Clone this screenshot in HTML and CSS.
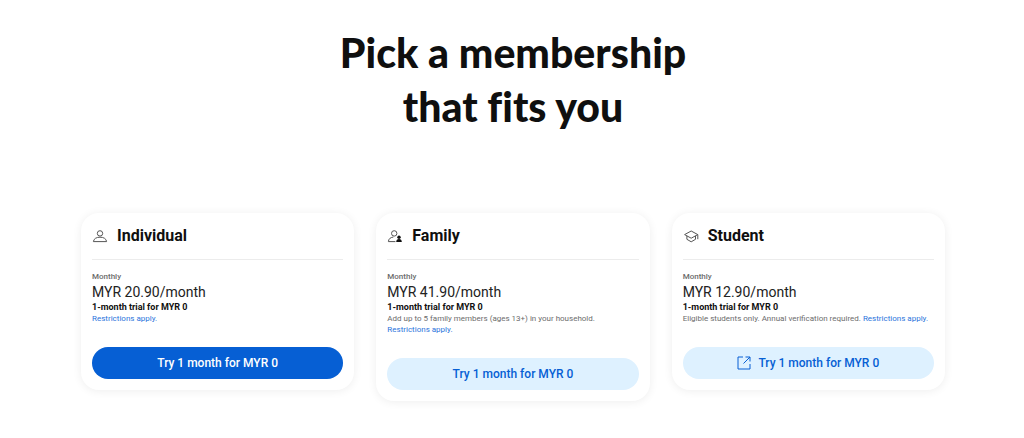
FILE: index.html
```html
<!DOCTYPE html>
<html lang="en">
<head>
  <meta charset="UTF-8" />
  <meta name="viewport" content="width=device-width, initial-scale=1" />
  <title>Pick a membership</title>
  <link rel="stylesheet" href="styles.css">
</head>
<body>

  <main class="membership">
    <h1>Pick a membership<br>that fits you</h1>

    <div class="plans">

      <!-- Individual -->
      <section class="plan">
        <header class="plan-header">
          <svg class="plan-icon" viewBox="0 0 16 16" aria-hidden="true">
            <circle cx="8" cy="5.4" r="2.7" />
            <path d="M1.4 13.6C1.8 10.6 4.4 9.2 8 9.2s6.2 1.4 6.6 4.4z" />
          </svg>
          <h2>Individual</h2>
        </header>
        <p class="period">Monthly</p>
        <p class="price">MYR 20.90/month</p>
        <p class="trial">1-month trial for MYR 0</p>
        <p class="terms"><a href="#">Restrictions apply.</a></p>
        <button type="button" class="btn btn-primary">Try 1 month for MYR 0</button>
      </section>

      <!-- Family -->
      <section class="plan">
        <header class="plan-header">
          <svg class="plan-icon" viewBox="0 0 16 16" aria-hidden="true">
            <circle cx="7.2" cy="5.4" r="2.7" />
            <path d="M8.4 13.6H1.4c.2-2.8 1.8-4 5-4.6" />
            <circle class="solid" cx="12" cy="9.3" r="1.7" />
            <path class="solid" d="M9.2 14.1c0-2.1 1-3 2.8-3s2.8.9 2.8 3z" />
          </svg>
          <h2>Family</h2>
        </header>
        <p class="period">Monthly</p>
        <p class="price">MYR 41.90/month</p>
        <p class="trial">1-month trial for MYR 0</p>
        <p class="terms">Add up to 5 family members (ages 13+) in your household. <a href="#">Restrictions apply.</a></p>
        <button type="button" class="btn">Try 1 month for MYR 0</button>
      </section>

      <!-- Student -->
      <section class="plan">
        <header class="plan-header">
          <svg class="plan-icon" viewBox="0 0 16 16" aria-hidden="true">
            <path d="M1.6 6.6L8.2 3l6.6 3.6-6.6 3.6z" />
            <path d="M3.9 7.9v3.4l4.3 2.5 4.3-2.5V7.9M14.8 6.6v4.6" />
          </svg>
          <h2>Student</h2>
        </header>
        <p class="period">Monthly</p>
        <p class="price">MYR 12.90/month</p>
        <p class="trial">1-month trial for MYR 0</p>
        <p class="terms">Eligible students only. Annual verification required. <a href="#">Restrictions apply.</a></p>
        <button type="button" class="btn">
          <svg class="btn-icon" viewBox="0 0 14 14" aria-hidden="true">
            <path d="M6 1H1v12h12V8M8.5 1H13v4.5M13 1L6.5 7.5" />
          </svg>
          Try 1 month for MYR 0
        </button>
      </section>

    </div>
  </main>

</body>
</html>
```
FILE: styles.css
```css
:root {
  --text: #0f0f0f;
  --muted: #6c6c6c;
  --blue: #065fd4;
  --light-blue: #def1ff;
}

* {
  box-sizing: border-box;
}

body {
  margin: 0;
  background: #fff;
  color: var(--text);
  font-family: Roboto, sans-serif;
}

.membership {
  padding: 26px 79px 36px 81px;
}

h1 {
  margin: 0 0 79px;
  font-family: Lato, sans-serif;
  font-size: 41px;
  font-weight: 900;
  font-variant-ligatures: none;
  line-height: 54px;
  text-align: center;
}

.plans {
  display: grid;
  grid-template-columns: repeat(3, 1fr);
  align-items: start;
  gap: 22px;
}

.plan {
  padding: 0 11px 11px;
  border-radius: 18px;
  background: #fff;
  box-shadow: 0 1px 10px rgba(0, 0, 0, 0.07);
}

.plan p {
  margin: 0;
}

.plan-header {
  display: flex;
  align-items: center;
  gap: 9px;
  height: 47px;
  margin-bottom: 11px;
  border-bottom: 1px solid #ececec;
}

.plan-icon {
  width: 16px;
  height: 16px;
  fill: none;
  stroke: #555;
  stroke-width: 1;
}

.plan-icon .solid {
  fill: #0f0f0f;
  stroke: none;
}

h2 {
  margin: 0;
  font-size: 16px;
  font-weight: 700;
  line-height: 20px;
}

.period {
  color: var(--muted);
  font-size: 8px;
  font-weight: 500;
  line-height: 12px;
}

.plan .price {
  color: #222;
  font-size: 14px;
  line-height: 18px;
}

.trial {
  font-size: 9px;
  font-weight: 700;
  line-height: 12px;
}

.plan .terms {
  margin-bottom: 23px;
  color: var(--muted);
  font-size: 8px;
  line-height: 11px;
}

.terms a {
  color: #2a74dc;
  text-decoration: none;
}

.btn {
  display: flex;
  align-items: center;
  justify-content: center;
  gap: 7px;
  width: 100%;
  height: 32px;
  padding: 0;
  border: none;
  border-radius: 16px;
  background: var(--light-blue);
  color: var(--blue);
  font-family: inherit;
  font-size: 12px;
  font-weight: 500;
  cursor: pointer;
}

.btn-primary {
  background: var(--blue);
  color: #fff;
}

.btn-icon {
  width: 14px;
  height: 14px;
  fill: none;
  stroke: currentColor;
  stroke-width: 1;
}

@media (max-width: 760px) {
  .membership {
    padding: 26px 20px;
  }

  .plans {
    grid-template-columns: 1fr;
  }
}
```
